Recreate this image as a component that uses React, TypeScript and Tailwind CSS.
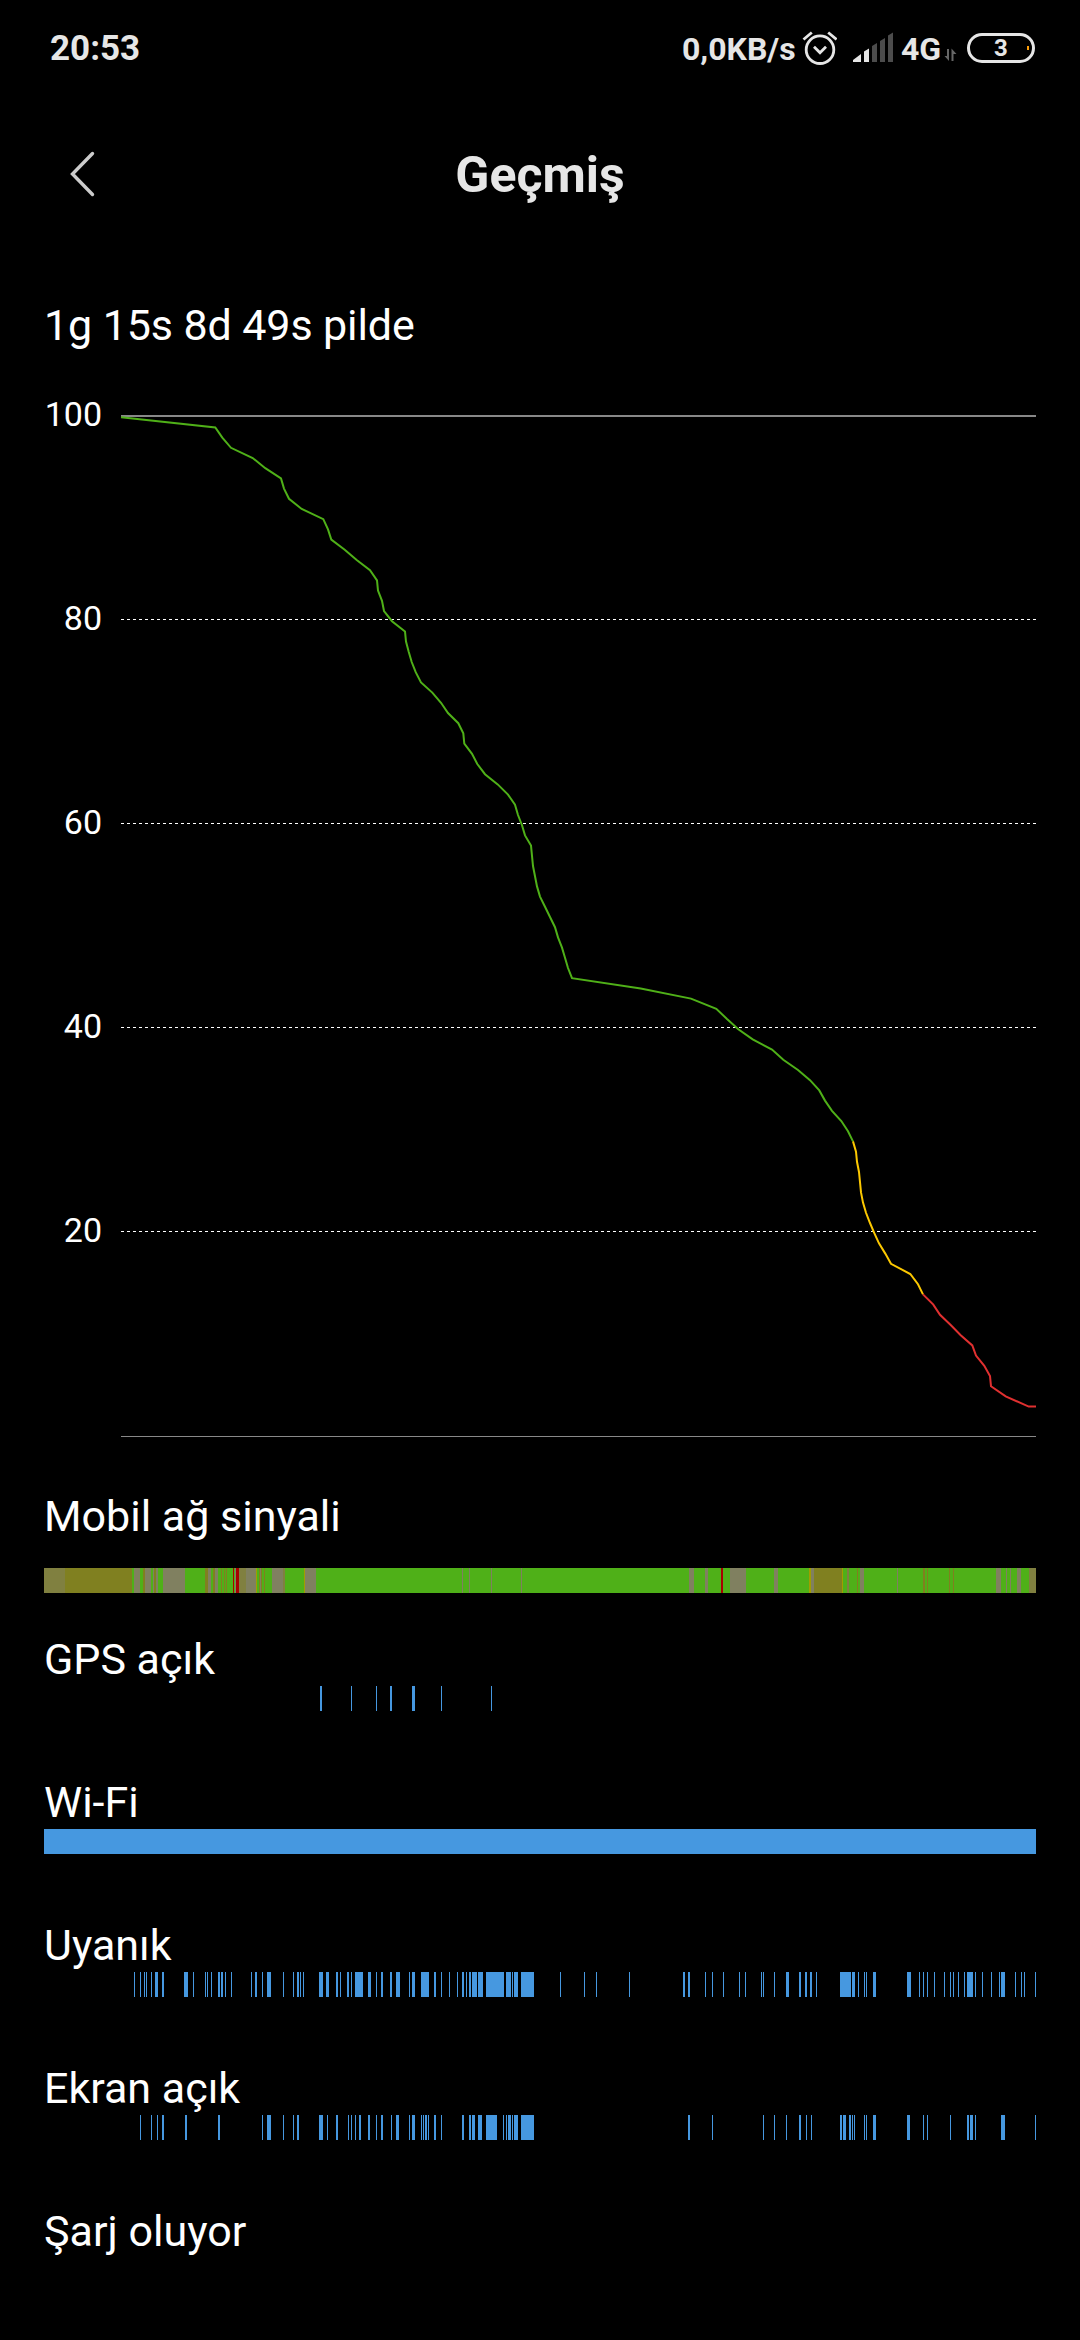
import type { ReactNode } from 'react'

type Range = [start: number, width: number]
type Segment = [start: number, color: string]

const BLUE = '#4698e0'
const GREEN = '#4fb018'
const GRAY = '#808060'
const OLIVE = '#808020'
const SAGE = '#808040'
const BROWN = '#80801f'
const AMBER = '#a09e00'
const RED = '#a80000'

// Moment (in chart px) at which each percent was reached, from 100 down to 3
const drainTimes = [
  121, 215.3, 222.3, 231, 252.7, 265.3, 281, 284, 289, 301.7, 323.3, 328, 331.3, 344.7, 356.7, 370, 377, 378, 382, 384,
  392, 405, 406, 408.7, 411.7, 415.7, 421, 432.3, 441, 448, 458.3, 463.3, 464.3, 472, 477.3, 485, 497.7, 508, 515, 518,
  522, 525, 531, 532, 533, 535, 537, 540, 545, 550, 555, 558, 562, 565, 568, 572, 640.7, 691, 716.3, 727,
  738.3, 752.7, 772, 783.3, 798, 810, 819.3, 825, 832, 841.3, 848, 853, 856, 857, 859, 860, 861, 863, 866, 870,
  874.3, 879, 885.3, 891, 910.3, 918, 923, 933.3, 940, 950.7, 960.7, 972.3, 976, 984.3, 990, 991, 1005.7, 1028.7,
]

const signalSegments: Segment[] = [
  [44, SAGE], [65, OLIVE], [132, GREEN], [134, GRAY], [140, GREEN], [143, BROWN], [145, GRAY], [151, GREEN],
  [153, GRAY], [154, BROWN], [156, GRAY], [158, GREEN], [163, GRAY], [185, GREEN], [205, BROWN], [208, GRAY],
  [211, GREEN], [213, BROWN], [215, GRAY], [218, GREEN], [221, BROWN], [222, GREEN], [224, BROWN], [225, GREEN],
  [226, BROWN], [227, GREEN], [233, RED], [234, GREEN], [235, GRAY], [236, RED], [239, SAGE], [246, GRAY],
  [256, AMBER], [257, GREEN], [259, BROWN], [260, GRAY], [261, BROWN], [262, GREEN], [264, BROWN], [265, GREEN],
  [272, GRAY], [283, SAGE], [285, GREEN], [304, AMBER], [305, GRAY], [316, GREEN], [462, GRAY], [463, GREEN],
  [469, GRAY], [470, GREEN], [491, GRAY], [492, GREEN], [521, GRAY], [522, GREEN], [689, GRAY], [694, GREEN],
  [705, GRAY], [708, GREEN], [721, RED], [723, GREEN], [730, GRAY], [746, GREEN], [774, GRAY], [778, GREEN],
  [809, AMBER], [811, GRAY], [814, OLIVE], [842, AMBER], [843, GREEN], [847, SAGE], [849, GREEN], [857, BROWN],
  [858, GREEN], [860, GRAY], [864, GREEN], [897, GRAY], [898, GREEN], [923, BROWN], [925, GREEN], [927, BROWN],
  [928, GREEN], [949, BROWN], [950, GREEN], [953, BROWN], [954, GREEN], [996, GRAY], [1001, GREEN], [1006, GRAY],
  [1007, GREEN], [1010, GRAY], [1011, GREEN], [1017, GRAY], [1021, GREEN], [1029, SAGE],
]

const gpsRanges: Range[] = [[320, 2], [351, 1], [376, 1], [390, 2], [412, 3], [441, 1], [491, 1]]

const awakeRanges: Range[] = [
  [134, 1], [140, 1], [144, 1], [146, 1], [151, 1], [155, 3], [162, 2], [184, 4], [193, 1], [205, 1], [207, 1],
  [211, 1], [218, 2], [221, 2], [225, 1], [231, 1], [251, 1], [255, 2], [262, 1], [267, 4], [283, 1], [293, 1],
  [297, 2], [300, 1], [303, 1], [319, 4], [326, 3], [336, 2], [340, 1], [347, 2], [351, 1], [355, 8], [368, 3],
  [376, 1], [370, 1], [381, 2], [390, 2], [396, 4], [409, 1], [412, 3], [421, 8], [434, 2], [441, 1], [449, 1],
  [457, 1], [462, 2], [466, 1], [469, 2], [472, 5], [478, 5], [486, 18], [506, 5], [512, 1], [514, 4], [521, 13],
  [560, 1], [584, 1], [596, 1], [629, 1], [683, 2], [688, 2], [705, 1], [712, 1], [723, 1], [739, 1], [745, 1],
  [761, 1], [763, 1], [774, 1], [786, 3], [799, 2], [805, 2], [810, 2], [816, 1], [840, 11], [852, 3], [858, 1],
  [864, 1], [866, 1], [873, 3], [907, 4], [919, 1], [923, 1], [927, 1], [934, 1], [944, 1], [950, 1], [953, 1],
  [958, 1], [964, 1], [967, 6], [975, 1], [982, 1], [991, 1], [999, 1], [1001, 4], [1015, 1], [1021, 1],
  [1024, 1], [1035, 1],
]

const screenRanges: Range[] = [
  [140, 1], [151, 1], [157, 1], [162, 2], [185, 2], [218, 2], [262, 1], [267, 4], [283, 1], [293, 1], [297, 2],
  [319, 4], [327, 1], [336, 2], [348, 1], [351, 1], [355, 1], [359, 2], [368, 2], [376, 1], [381, 2], [391, 1],
  [396, 3], [409, 1], [412, 3], [421, 1], [423, 1], [425, 2], [428, 1], [434, 2], [441, 1], [462, 2], [469, 2],
  [472, 3], [478, 4], [486, 11], [503, 1], [506, 1], [508, 3], [512, 1], [514, 4], [521, 13], [688, 2], [712, 1],
  [763, 1], [774, 1], [786, 1], [799, 2], [806, 1], [811, 1], [840, 2], [843, 3], [849, 2], [852, 1], [854, 1],
  [864, 1], [866, 1], [873, 3], [907, 3], [923, 1], [927, 1], [950, 1], [967, 2], [970, 3], [975, 1], [1001, 4],
  [1035, 1],
]

function StatusBar() {
  return (
    <header className="flex h-[100px] justify-between pr-[45px] pl-[50px] leading-[40px] font-bold text-[#e6e6e6]">
      <span className="mt-[29px] text-[35px]">20:53</span>
      <div className="mt-[29px] flex h-10 text-[32px]">
        <span className="w-[120px] whitespace-nowrap">0,0KB/s</span>
        <svg className="h-10 w-[35px]" viewBox="802 29 35 40" fill="none" stroke="#e6e6e6" strokeWidth="2.8">
          <circle cx="820" cy="49.7" r="13.8" />
          <path d="M814 46.7l6 6 6-6M803.5 39.5l8.3-7M828.2 32.5l8.3 7" />
        </svg>
        <svg className="ml-4 h-10 w-10" viewBox="853 29 40 40" fill="#e6e6e6">
          <path d="M853 60l8-6v8h-8zM864 51.5l5-3V62h-5z" />
          <path fill="#4c4c4c" d="M872 46l5-3v19h-5zM880 41l5-3V62h-5zM888 35.5l5-3V62h-5z" />
        </svg>
        <span className="ml-2 w-[42px]">4G</span>
        <svg className="h-10 w-[14px]" viewBox="943 29 14 40" fill="#666">
          <path d="M947 49h2v12l-4.5-5h2.5zM951.5 61V48.5l5 5.5h-3v7z" />
        </svg>
        <div className="mt-1 ml-[10px] flex h-[30px] w-[68px] items-center rounded-full border-[3px] border-[#e6e6e6]">
          <span className="w-full pl-[5px] text-center text-[24px] leading-6">3</span>
          <i className="mr-[3px] h-1 w-[2px] shrink-0 bg-[#ff9f0a]" />
        </div>
      </div>
    </header>
  )
}

function DrainLine({ from, to, color }: { from: number; to: number; color: string }) {
  const points = drainTimes
    .slice(100 - from, 101 - to)
    .map((x, i) => `${x},${(417.2 + (100 - from + i) * 10.2).toFixed(1)}`)
  if (to === 3) points.push('1036,1406.6')
  return <polyline points={points.join(' ')} fill="none" stroke={color} strokeWidth="2" />
}

function BatteryChart() {
  return (
    <section className="mt-[42px] flex h-[1043px]">
      <div className="w-[58px] text-right text-[34px] leading-[40px]">
        {[100, 80, 60, 40, 20].map((level) => (
          <div key={level} className="h-[204px]">{level}</div>
        ))}
      </div>
      <svg className="mt-[21px] ml-[19px] h-[1022px] w-[915px]" viewBox="121 415 915 1022">
        <path d="M121 416h915" stroke="#888" strokeWidth="2" />
        <path
          d="M121 619.5h915M121 823.5h915M121 1027.5h915M121 1231.5h915"
          stroke="#fff"
          strokeDasharray="3 3"
        />
        <path d="M121 1436.5h915" stroke="#888" />
        <DrainLine from={100} to={29} color={GREEN} />
        <DrainLine from={29} to={14} color="#fcc800" />
        <DrainLine from={14} to={3} color="#e03030" />
      </svg>
    </section>
  )
}

function Strip({ children }: { children?: ReactNode }) {
  return (
    <svg className="block h-[25px] w-[992px]" viewBox="44 0 992 25" shapeRendering="crispEdges">
      {children}
    </svg>
  )
}

function Timeline({ label, ranges }: { label: string; ranges: Range[] }) {
  return (
    <section className="h-[143px]">
      <h2>{label}</h2>
      <Strip>
        {ranges.map(([x, width]) => (
          <rect key={x} x={x} width={width} height="25" fill={BLUE} />
        ))}
      </Strip>
    </section>
  )
}

export default function App() {
  return (
    <div className="h-[2340px] w-[1080px] overflow-hidden bg-black font-[Roboto,sans-serif] text-white">
      <StatusBar />
      <div className="flex h-[198px] items-start px-[68px] pt-[45px] text-[#e6e6e6]">
        <svg className="mt-1 h-[50px] w-[30px]" viewBox="68 154 30 50" fill="none" stroke="#ccc" strokeWidth="3.4" strokeLinecap="round">
          <path d="M92.500 158.500L72.500 179l20 20.500" />
        </svg>
        <h1 className="flex-1 pr-[30px] text-center text-[50px] leading-[60px] font-bold">Geçmiş</h1>
      </div>
      <main className="px-11 text-[43px] leading-[54px]">
        <p className="tracking-[-0.1px]">1g 15s 8d 49s pilde</p>
        <BatteryChart />
        <section className="mt-[52px] h-[143px]">
          <h2 className="mb-[25px]">Mobil ağ sinyali</h2>
          <Strip>
            {signalSegments.map(([x, color], i) => (
              <rect key={x} x={x} width={(signalSegments[i + 1]?.[0] ?? 1036) - x} height="25" fill={color} />
            ))}
          </Strip>
        </section>
        <Timeline label="GPS açık" ranges={gpsRanges} />
        <Timeline label="Wi-Fi" ranges={[[44, 992]]} />
        <Timeline label="Uyanık" ranges={awakeRanges} />
        <Timeline label="Ekran açık" ranges={screenRanges} />
        <Timeline label="Şarj oluyor" ranges={[]} />
      </main>
    </div>
  )
}
